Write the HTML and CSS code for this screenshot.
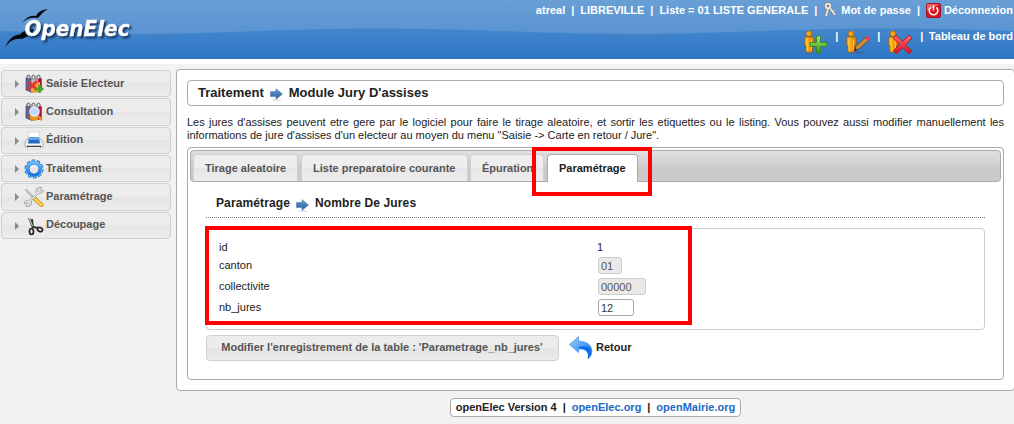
FILE: index.html
```html
<!DOCTYPE html>
<html lang="fr">
<head>
<meta charset="utf-8">
<title>OpenElec</title>
<link rel="stylesheet" href="styles.css">
</head>
<body>
<svg class="defs" width="0" height="0" aria-hidden="true">
  <defs>
    <linearGradient id="hi" x2="0" y2="1"><stop stop-color="#699fd5"/><stop offset="1" stop-color="#5993d2"/></linearGradient>
    <linearGradient id="person" x2="1"><stop stop-color="#ffbd25"/><stop offset="1" stop-color="#ed8500"/></linearGradient>
    <linearGradient id="green" x2="0" y2="1"><stop stop-color="#a7e76c"/><stop offset="1" stop-color="#329a18"/></linearGradient>
    <linearGradient id="red" x2="0" y2="1"><stop stop-color="#ff6a6a"/><stop offset="1" stop-color="#d81425"/></linearGradient>
    <linearGradient id="blue" x2="0" y2="1"><stop stop-color="#68bdf8"/><stop offset="1" stop-color="#1975df"/></linearGradient>
    <linearGradient id="arrow" x2="0" y2="1"><stop stop-color="#6d9ad0"/><stop offset="1" stop-color="#285b9d"/></linearGradient>
    <linearGradient id="back" x2="1" y2="1"><stop stop-color="#a4d4fd"/><stop offset=".5" stop-color="#4f9ff5"/><stop offset="1" stop-color="#0759dc"/></linearGradient>
    <symbol id="man" viewBox="0 0 11 23"><circle cx="5.2" cy="3.7" r="2.9" fill="url(#person)" stroke="#9a5a08" stroke-width=".7"/><path d="M1.8 7h6.8q1.4 0 1.4 1.5v7H8.5V21q0 1.3-1.5 1.3H3.6Q2 22.300 2 21v-5.500H.8V8.500Q.8 7 1.800 7z" fill="url(#person)" stroke="#9a5a08" stroke-width=".8"/><path d="M3 9v12M7.500 10v10" stroke="#ffd25c" stroke-width=".8"/></symbol>
    <symbol id="step" viewBox="0 0 13 13"><ellipse cx="7" cy="12" rx="5" ry=".8" fill="#ddd"/><path d="M.5 3.500H6V.700L12.500 6 6 11.300V8.500H.5z" fill="url(#arrow)" stroke="#4b7db9" stroke-width=".6"/></symbol>
    <symbol id="bag" viewBox="0 0 20 20"><path d="M3 5V2q1-2 3 0v3M8 5V2q1.500-2 3 0v3M13 5V2q1.500-2 3 0v3" fill="none" stroke="#55575b" stroke-width="1"/><path d="M2 4l5 1v13l-5-2z" fill="#63658b" stroke="#454660" stroke-width=".7"/><path d="M7 5h10.500v12L7 18.500z" fill="#bcb8cb" stroke="#777184" stroke-width=".7"/><path d="M14 5l3.500-1v12L14 18z" fill="#b60d34"/></symbol>
  </defs>
</svg>

<header class="header">
  <svg class="wave" width="1014" height="59"><path d="M0 0H1014V31C980 29.500 920 28.500 880 28.500C790 28.500 720 34 630 34S470 28.500 380 28.500S220 34 130 34C85 34 40 32.500 0 31z" fill="url(#hi)"/></svg>
  <svg class="logo" width="150" height="59" viewBox="0 0 150 59" role="img" aria-label="OpenElec">
    <path d="M22 23C25 18 31 14.500 36 16C38 11.500 43 9.500 48 9C43 11.500 41 15 38 18C32 17 26 18 22 23z" fill="#050a10"/>
    <path d="M5 48C8 39 15 34 20 34.500C23 31 28 29 34 29L31 36C27 36 25 37.500 22 39C15 38 9 41 5 48z" fill="#050a10"/>
    <text class="logo-text" x="24.500" y="36" textLength="105" lengthAdjust="spacingAndGlyphs">OpenElec</text>
  </svg>
  <div class="account">
    <span>atreal</span><i>|</i><span>LIBREVILLE</span><i>|</i><span>Liste = 01 LISTE GENERALE</span><i>|</i>
    <svg class="keys" width="13" height="16" viewBox="0 0 13 16"><g fill="none" stroke="#747d83" stroke-width="3.400"><circle cx="4" cy="4" r="2.300"/><path d="M4 7L2 14M6 6l5 7"/></g><g fill="none" stroke="#e1e3df" stroke-width="2"><circle cx="4" cy="4" r="2.300"/><path d="M4 7L2 14M6 6l5 7M8 10l2-1"/></g></svg>
    <span>Mot de passe</span><i>|</i>
    <svg class="power" width="15" height="15" viewBox="0 0 15 15"><rect x=".5" y=".5" width="14" height="14" rx="1.500" fill="#d91520" stroke="#9f1424"/><path d="M1 1h13L1 8z" fill="#ef6065"/><path d="M4.700 4.300a4.300 4.300 0 1 0 5.600 0M7.500 2.500v5" fill="none" stroke="#fff" stroke-width="1.500"/></svg>
    <span>Déconnexion</span>
  </div>
  <div class="shortcuts">
    <svg width="24" height="24"><use href="#man" width="11" height="23"/><path d="M12.500 6h4v6.500h6.500v4h-6.500v6.500h-4v-6.500h-6.500v-4h6.500z" fill="url(#green)" stroke="#3b7f20" stroke-width=".8"/></svg><i>|</i>
    <svg width="24" height="24"><ellipse cx="14" cy="22.500" rx="6" ry="1" fill="#2a5b93" opacity=".5"/><use href="#man" width="11" height="23"/><path d="M8 21l2-5L20 7l3 3-10 9z" fill="#c98c43" stroke="#5a3b20" stroke-width=".8"/><path d="M19 8l2-2q3 0 2.500 3L22 11z" fill="#ed4142"/><path d="M8 21l1.500-3 1.500 1.500z" fill="#222"/></svg><i>|</i>
    <svg width="25" height="24"><use href="#man" width="11" height="23"/><path d="M8 5l6.500 6.500L21 5l3 3-6.500 7 6.500 6-3 2.700-6.500-6-6 6-3-3 6-6.500L5.200 8z" fill="url(#red)" stroke="#ae1823" stroke-width=".9"/></svg><i>|</i>
    <span>Tableau de bord</span>
  </div>
</header>

<div class="main">
  <nav class="menu">
    <a class="item"><b class="tri"></b><svg width="20" height="20"><use href="#bag" width="20" height="20"/><path d="M7 8h9v9l-5 2-4-2z" fill="#f7a333"/><path d="M5 8l8 8m0-9l-9 9" stroke="#df3535" stroke-width="2.600"/><path d="M15.500 11v8m-4-4h8" stroke="#43a928" stroke-width="2.500"/></svg><span>Saisie Electeur</span></a>
    <a class="item"><b class="tri"></b><svg width="20" height="20"><use href="#bag" width="20" height="20"/><path d="M6 13h8v4l-4 2-4-2z" fill="#f2901c"/><circle cx="10.500" cy="9.500" r="4.500" fill="#b9dafa" stroke="#e7eaf1" stroke-width="1.500"/><path d="M14 14l4 4" stroke="#d79226" stroke-width="2.500"/></svg><span>Consultation</span></a>
    <a class="item"><b class="tri"></b><svg width="20" height="20"><path d="M5 1h10l1 8H4z" fill="#fff" stroke="#c8cbd2" stroke-width=".7"/><path d="M3 8h14l2 3v5H1v-5z" fill="#e7e9ed" stroke="#999ca4" stroke-width=".7"/><path d="M5 6h10l1 7H4z" fill="#2869bd"/><path d="M5 6h10l.4 3H4.600z" fill="#61a4e7"/><path d="M2 12.500h16V15H2z" fill="#f8f8fa"/><path d="M3 15.500h14" stroke="#222" stroke-width="1.500"/><path d="M4 16h12l1 2H3z" fill="#f9f9fb" stroke="#bbb" stroke-width=".5"/></svg><span>Édition</span></a>
    <a class="item"><b class="tri"></b><svg width="20" height="20"><g fill="none"><circle cx="10" cy="10" r="8" stroke="#1761b6" stroke-width="3" stroke-dasharray="3.300 1.727"/><circle cx="10" cy="10" r="6.300" stroke="#226fc7" stroke-width="3.600"/><circle cx="10" cy="10" r="7.800" stroke="#5fb0f3" stroke-width="2.200" stroke-dasharray="3 1.901"/><circle cx="10" cy="10" r="6.300" stroke="url(#blue)" stroke-width="2.600"/></g></svg><span>Traitement</span></a>
    <a class="item"><b class="tri"></b><svg width="20" height="20"><g fill="none" stroke-linecap="round"><path d="M2 3l9 9" stroke="#999" stroke-width="1.800"/><path d="M2 3l9 9" stroke="#e2e2df" stroke-width=".9"/><path d="M11 12l6.500 6" stroke="#bd8517" stroke-width="4"/><path d="M11 12l6.500 6" stroke="#ffd34a" stroke-width="2.600"/><path d="M4 16L15 5M18.500 4l-2.500 1.500-1.500-1.500L16 1.500c-3 .5-4 2-3 4.500M1 16l2-1.500L5 16l-1.500 2.500c3-.5 4-2 3-4.500" stroke="#8b8d90" stroke-width="2.300"/><path d="M4 16L15 5M18.500 4l-2.500 1.500-1.500-1.500L16 1.500c-3 .5-4 2-3 4.500M1 16l2-1.500L5 16l-1.500 2.500c3-.5 4-2 3-4.500" stroke="#efefed" stroke-width="1.200"/></g></svg><span>Paramétrage</span></a>
    <a class="item"><b class="tri"></b><svg width="20" height="20"><path d="M5 2l4 10M8 3l1 8 5 1" fill="none" stroke="#333" stroke-width="1.900"/><path d="M5 2l3.500 8" stroke="#ddd" stroke-width="1"/><ellipse cx="7.500" cy="15.500" rx="2" ry="3" fill="none" stroke="#222" stroke-width="1.700"/><ellipse cx="16" cy="13.500" rx="2.600" ry="2" transform="rotate(25 16 13.500)" fill="none" stroke="#222" stroke-width="1.700"/></svg><span>Découpage</span></a>
  </nav>

  <main class="panel">
    <h1 class="title">Traitement <svg width="13" height="13"><use href="#step"/></svg> Module Jury D'assises</h1>
    <div class="intro">Les jures d'assises peuvent etre gere par le logiciel pour faire le tirage aleatoire, et sortir les etiquettes ou le listing. Vous pouvez aussi modifier manuellement les informations de jure d'assises d'un electeur au moyen du menu "Saisie -&gt; Carte en retour / Jure".</div>
    <section class="tabs">
      <div class="tabbar">
        <a class="tab t1">Tirage aleatoire</a><a class="tab t2">Liste preparatoire courante</a><a class="tab t3">Épuration</a><a class="tab t4 active">Paramétrage</a>
      </div>
      <div class="content">
        <h2 class="subtitle">Paramétrage <svg width="13" height="13"><use href="#step"/></svg> Nombre De Jures</h2>
        <form class="fields">
          <div class="row first"><label>id</label><span>1</span></div>
          <div class="row"><label>canton</label><input class="w24" value="01" disabled></div>
          <div class="row"><label>collectivite</label><input class="w48" value="00000" disabled></div>
          <div class="row"><label>nb_jures</label><input class="w36" value="12"></div>
        </form>
        <div class="actions">
          <button class="submit" type="button">Modifier l'enregistrement de la table : 'Parametrage_nb_jures'</button>
          <svg width="24" height="24" viewBox="0 0 24 24"><path d="M.5 8.500L9.500.7v4.500C18 5 24.500 10 22.500 18q-1 3-3.500 5C20.500 16 17 12.500 9.500 13v3.500z" fill="url(#back)" stroke="#3d8fe8" stroke-width=".7"/><path d="M9.500 12.500C17 12 20.500 16 19 23c3-4 4-8 1-11q-4-3-10.500-1z" fill="#086eea"/></svg>
          <a>Retour</a>
        </div>
      </div>
    </section>
  </main>
</div>
<footer class="footer"><div class="foot"><span>openElec Version 4</span><i>|</i><a>openElec.org</a><i>|</i><a>openMairie.org</a></div></footer>
<div class="mark mark-tab"></div>
<div class="mark mark-form"></div>
</body>
</html>
```

FILE: styles.css
```css
* { box-sizing: border-box; }
body { margin: 0; width: 1014px; height: 424px; position: relative; overflow: hidden; background: #f2f2f2; font: 11px/13px "Liberation Sans", Arial, sans-serif; color: #222; }
svg { flex: none; display: block; }
i { font-style: normal; }
.defs { position: absolute; }
.header { position: relative; height: 64px; border-bottom: 5px solid #fff; background: linear-gradient(#4a89cc 0, #4285cb 30px, #2e76c6 59px); color: #fff; font-weight: bold; overflow: hidden; }
.wave, .logo { position: absolute; left: 0; top: 0; }
.logo-text { font: italic bold 21px "DejaVu Sans", sans-serif; fill: #fff; stroke: #fff; stroke-width: .3px; filter: drop-shadow(2px 2px 1px #123258); }
.account { position: relative; display: flex; justify-content: flex-end; height: 20px; align-items: center; white-space: nowrap; }
.account i { width: 15px; text-align: center; }
.keys { margin: 0 4px 0 1px; }
.power { margin: 0 3px 0 0; }
.account span:last-child { margin-right: 1px; }
.shortcuts { position: relative; display: flex; justify-content: flex-end; padding: 10px 1px 0 0; white-space: nowrap; }
.shortcuts i { width: 18px; text-align: center; }
.shortcuts span { margin-left: -2px; }
.main { display: flex; width: 1015px; padding-top: 5px; height: 327px; }
.menu { width: 170px; margin: 1px 5px 0 1px; display: flex; flex-direction: column; gap: 1px; height: 169px; }
.item { flex: 1; display: flex; align-items: center; border: 1px solid #d0d0d0; border-radius: 4px; background: linear-gradient(#ececec 50%, #e5e5e5 50%, #ececec); color: #555; font-weight: bold; padding-left: 13px; }
.tri { width: 0; height: 0; border: 4px solid transparent; border-left-color: #888; border-right: 0; margin: 1px 5px 0 0; }
.item svg { margin: 1px 2px 0 0; }
.item span { margin-top: -1px; }
.panel { width: 839px; height: 322px; background: #fff; border: 1px solid #aaa; border-radius: 4px; padding: 10px; }
.title { margin: 0; height: 26px; border: 1px solid #aaa; border-radius: 4px; font-size: 13px; padding-left: 10px; display: flex; align-items: center; gap: 6px; width: 817px; padding-bottom: 1px; }
.title svg, .subtitle svg { margin-top: 4px; }
.intro { margin: 10px 0 5px; width: 817px; text-align: justify; }
.tabs { width: 817px; height: 233px; border: 1px solid #aaa; border-radius: 4px; padding: 2px; }
.tabbar { height: 32px; border: 1px solid #aaa; border-radius: 4px; background: linear-gradient(#e1e1e1, #c9c9c9 60%, #ccc); display: flex; gap: 3px; padding: 3px 0 0 2px; }
.tab { height: 27px; border: 1px solid #d0d0d0; border-bottom: 0; border-radius: 4px 4px 0 0; background: linear-gradient(#eee 50%, #e6e6e6 50%, #ededed); color: #555; font-weight: bold; padding: 7px 0 0 11px; white-space: nowrap; }
.t1 { width: 105px; } .t2 { width: 167px; } .t3 { width: 74px; margin-left: -1px; } .t4 { width: 91px; }
.active { height: 28px; background: #fff; border-color: #aaa; color: #212121; }
.content { padding: 11px 16px 0; }
.subtitle { margin: 0 0 10px; height: 25px; border-bottom: 1px dotted #777; font-size: 12px; letter-spacing: .12px; display: flex; align-items: center; gap: 6px; padding: 0 0 4px 10px; }
.fields { height: 102px; border: 1px solid #ccc; border-radius: 4px; padding: 10px 12px; }
.row { display: grid; grid-template-columns: 379px auto; justify-content: start; align-items: center; height: 21px; }
.row.first { height: 16px; }
.row.first span { margin-left: -1px; }
.row label { margin-top: -1px; }
.row.first label { margin-top: 0; }
.row input { height: 17px; border: 1px solid #aaa; border-radius: 3px; padding: 0 2px; font: inherit; color: #333; background: #fff; }
.row input:disabled { border-color: #ccc; background: #ebe9e8; color: #555; }
.w24 { width: 24px; } .w48 { width: 48px; } .w36 { width: 36px; }
.actions { margin-top: 5px; display: flex; align-items: center; font-weight: bold; height: 26px; }
.submit { width: 353px; height: 26px; border: 1px solid #d0d0d0; border-radius: 4px; background: linear-gradient(#ececec 50%, #e4e4e4 50%, #ececec); font: inherit; color: #555; padding: 0 1px 2px 0; white-space: nowrap; }
.actions svg { margin: 0 3px 0 10px; }
.actions a { margin-top: -2px; }
.footer { display: flex; justify-content: center; padding: 7px 0 0 177px; width: 1014px; }
.foot { width: 291px; height: 19px; border: 1px solid #aaa; border-radius: 4px; background: #fff; display: flex; align-items: center; justify-content: center; font-weight: bold; white-space: nowrap; }
.foot a { color: #1c6ac5; }
.foot i { width: 15px; text-align: center; }
.mark { position: absolute; border: 4px solid #f00; }
.mark-tab { left: 532px; top: 147px; width: 120px; height: 49px; }
.mark-form { left: 205px; top: 226px; width: 487px; height: 99px; }
```
